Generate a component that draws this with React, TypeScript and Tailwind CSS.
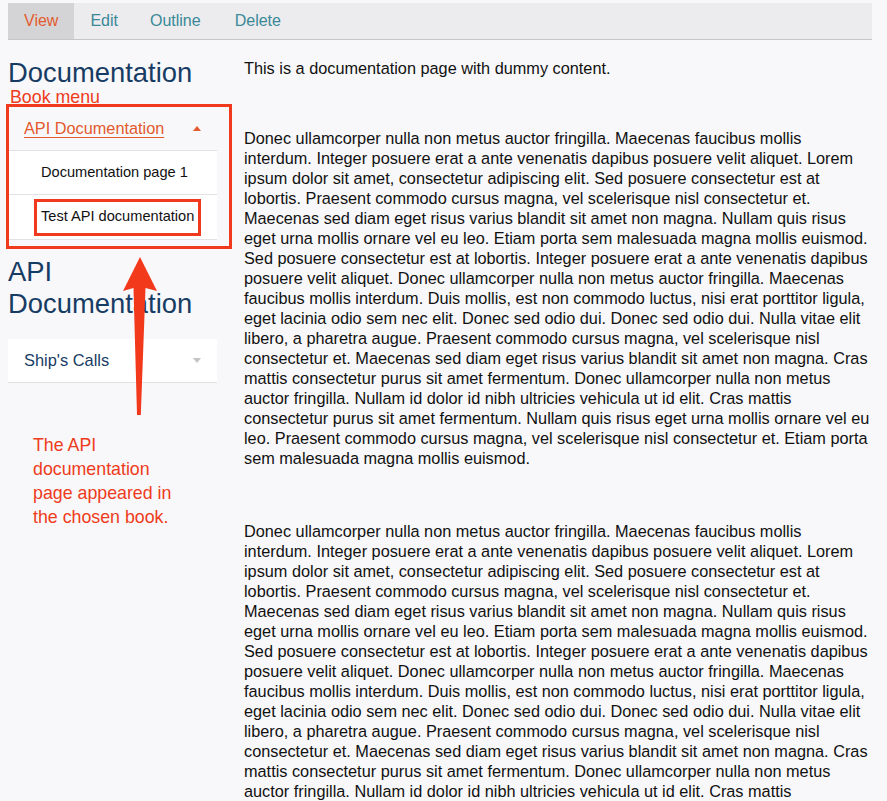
import React from 'react';

const LOREM =
  'Donec ullamcorper nulla non metus auctor fringilla. Maecenas faucibus mollis interdum. Integer posuere erat a ante venenatis dapibus posuere velit aliquet. Lorem ipsum dolor sit amet, consectetur adipiscing elit. Sed posuere consectetur est at lobortis. Praesent commodo cursus magna, vel scelerisque nisl consectetur et. Maecenas sed diam eget risus varius blandit sit amet non magna. Nullam quis risus eget urna mollis ornare vel eu leo. Etiam porta sem malesuada magna mollis euismod. Sed posuere consectetur est at lobortis. Integer posuere erat a ante venenatis dapibus posuere velit aliquet. Donec ullamcorper nulla non metus auctor fringilla. Maecenas faucibus mollis interdum. Duis mollis, est non commodo luctus, nisi erat porttitor ligula, eget lacinia odio sem nec elit. Donec sed odio dui. Donec sed odio dui. Nulla vitae elit libero, a pharetra augue. Praesent commodo cursus magna, vel scelerisque nisl consectetur et. Maecenas sed diam eget risus varius blandit sit amet non magna. Cras mattis consectetur purus sit amet fermentum. Donec ullamcorper nulla non metus auctor fringilla. Nullam id dolor id nibh ultricies vehicula ut id elit. Cras mattis consectetur purus sit amet fermentum. Nullam quis risus eget urna mollis ornare vel eu leo. Praesent commodo cursus magna, vel scelerisque nisl consectetur et. Etiam porta sem malesuada magna mollis euismod.';

const tabs = ['View', 'Edit', 'Outline', 'Delete'];

const Caret: React.FC<{ up?: boolean; color: string }> = ({ up, color }) => (
  <svg width="8" height="5" viewBox="0 0 8 5" className="shrink-0">
    <path d={up ? 'M0 5 L4 0 L8 5 Z' : 'M0 0 L4 5 L8 0 Z'} fill={color} />
  </svg>
);

const App: React.FC = () => {
  return (
    <div className="relative min-h-screen bg-[#f8f8fa] pl-[8px] pr-[15px] pt-[3px] font-['Liberation_Sans',Arial,sans-serif] text-[#111]">
      {/* Tabs */}
      <div className="flex h-[37px] bg-[#ececee] border-b border-[#c6c6c8]">
        {tabs.map((t, i) => (
          <div
            key={t}
            className={`flex items-center px-[16px] text-[16px] ${
              i === 0 ? 'bg-[#d4d4d6] text-[#e35b2e]' : 'text-[#3a8898]'
            } ${i === 3 ? 'pl-[18px]' : ''}`}
          >
            {t}
          </div>
        ))}
      </div>

      <div className="flex gap-[27px]">
        {/* Sidebar */}
        <aside className="w-[209px] shrink-0">
          <h2 className="mt-[20px] text-[27.4px] leading-[26px] text-[#173c64]">Documentation</h2>
          <div className="mt-[1px] text-[17.8px] leading-[20px] pl-[2px] text-[#ee3b20]">Book menu</div>

          <div className="relative">
            <div className="border-b border-[#e2e2e4]">
              <div className="flex items-center justify-between h-[44px] pl-[16px] pr-[16px] border-b border-[#e2e2e4]">
                <span className="text-[16.3px] text-[#e25a2d] underline underline-offset-[3px]">API Documentation</span>
                <Caret up color="#e25a2d" />
              </div>
              <div className="flex items-center h-[44px] pl-[33px] bg-white border-b border-[#e2e2e4] text-[14.6px]">
                Documentation page 1
              </div>
              <div className="flex items-center h-[44px] pl-[33px] bg-white text-[14.6px]">
                <span className="relative">
                  Test API documentation
                  <span className="absolute -left-[7px] -right-[7px] -top-[7px] -bottom-[8px] border-[3px] border-[#f0391d]" />
                </span>
              </div>
            </div>
            <div className="absolute -left-[2px] -right-[15px] -top-[3px] -bottom-[9px] border-[3px] border-[#f0391d] pointer-events-none" />
          </div>

          <h2 className="mt-[16px] text-[27.4px] leading-[32px] text-[#173c64]">
            API
            <br />
            Documentation
          </h2>

          <div className="mt-[19px] flex items-center justify-between h-[44px] pl-[16px] pr-[16px] bg-white border-b border-[#e2e2e4]">
            <span className="text-[16.4px] text-[#173c64]">Ship's Calls</span>
            <Caret color="#c4c4c6" />
          </div>

          <p className="mt-[50px] pl-[25px] pr-[30px] text-[17.8px] leading-[24px] text-[#ee3b20]">
            The API documentation page appeared in the chosen book.
          </p>
        </aside>

        {/* Main content */}
        <main className="flex-1 min-w-0 text-[16.3px] leading-[20px]">
          <p className="mt-[18px]">This is a documentation page with dummy content.</p>
          <p className="mt-[50px]">{LOREM}</p>
          <p className="mt-[53px]">{LOREM}</p>
        </main>
      </div>

      {/* Annotation arrow */}
      <svg className="absolute left-0 top-0 pointer-events-none" width="200" height="430" viewBox="0 0 200 430">
        <polygon
          points="140,257 157,291 145.5,288 140.8,415 137,415 133.5,288 123,291"
          fill="#f2391c"
        />
      </svg>
    </div>
  );
};

export default App;
